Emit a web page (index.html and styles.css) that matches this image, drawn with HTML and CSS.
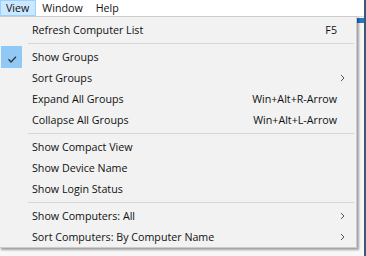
FILE: index.html
```html
<!DOCTYPE html>
<html>
<head>
<meta charset="utf-8">
<link rel="stylesheet" href="styles.css">
</head>
<body>
<div class="app">
  <div class="menubar">
    <span class="mb-item active">View</span>
    <span class="mb-item">Window</span>
    <span class="mb-item">Help</span>
  </div>
  <div class="content">
    <div class="accent"></div>
  </div>
  <div class="menu">
    <div class="item"><span class="label">Refresh Computer List</span><span class="key">F5</span><span class="sub"></span></div>
    <div class="sep"></div>
    <div class="item checked">
      <span class="check"><svg width="21" height="22" viewBox="0 0 21 22"><path d="M7.5 13.3 L10 16 L15 10.8" fill="none" stroke="#333" stroke-width="1.3"/></svg></span>
      <span class="label">Show Groups</span><span class="key"></span><span class="sub"></span>
    </div>
    <div class="item"><span class="label">Sort Groups</span><span class="key"></span><span class="sub"><svg width="5" height="8" viewBox="0 0 5 8"><path d="M1 1 L4 4 L1 7" fill="none" stroke="#555" stroke-width="1"/></svg></span></div>
    <div class="item"><span class="label">Expand All Groups</span><span class="key">Win+Alt+R-Arrow</span><span class="sub"></span></div>
    <div class="item"><span class="label">Collapse All Groups</span><span class="key">Win+Alt+L-Arrow</span><span class="sub"></span></div>
    <div class="sep"></div>
    <div class="item"><span class="label">Show Compact View</span><span class="key"></span><span class="sub"></span></div>
    <div class="item"><span class="label">Show Device Name</span><span class="key"></span><span class="sub"></span></div>
    <div class="item"><span class="label">Show Login Status</span><span class="key"></span><span class="sub"></span></div>
    <div class="sep"></div>
    <div class="item"><span class="label">Show Computers: All</span><span class="key"></span><span class="sub"><svg width="5" height="8" viewBox="0 0 5 8"><path d="M1 1 L4 4 L1 7" fill="none" stroke="#555" stroke-width="1"/></svg></span></div>
    <div class="item"><span class="label">Sort Computers: By Computer Name</span><span class="key"></span><span class="sub"><svg width="5" height="8" viewBox="0 0 5 8"><path d="M1 1 L4 4 L1 7" fill="none" stroke="#555" stroke-width="1"/></svg></span></div>
  </div>
</div>
</body>
</html>
```

FILE: styles.css
```css
html, body {
  margin: 0;
  padding: 0;
  background: #ffffff;
}
body {
  font-family: "Open Sans", "Noto Sans", sans-serif;
  font-size: 10.7px;
  font-weight: 500;
  color: #111;
}
.app {
  position: relative;
  width: 364px;
  height: 256px;
  border-right: 2px solid #3d5873;
  display: flex;
  flex-direction: column;
  overflow: hidden;
}
.menubar {
  height: 16px;
  border-bottom: 1px solid #d9d9d9;
  display: flex;
  align-items: stretch;
  background: #fff;
}
.mb-item {
  display: flex;
  align-items: center;
  padding: 0 6px 0 5px;
  border: 1px solid transparent;
  line-height: 14px;
}
.mb-item.active {
  background: #cce8ff;
  border-color: #99d1ff;
}
.content {
  flex: 1;
  background: #f7f7f7;
  display: flex;
  justify-content: flex-end;
  align-items: flex-start;
}
.accent {
  width: 7px;
  height: 5px;
  margin-top: 1px;
  background: #2678c6;
}
.menu {
  position: absolute;
  left: -1px;
  top: 16px;
  width: 356px;
  background: #f2f2f2;
  border: 1px solid #cccccc;
  padding: 2px 0 0 0;
  box-shadow: 2px 2px 2px rgba(0, 0, 0, 0.35);
}
.item {
  position: relative;
  height: 21px;
  display: flex;
  align-items: center;
  padding-left: 32px;
}
.label {
  flex: 1;
  white-space: nowrap;
}
.key {
  white-space: nowrap;
  text-align: right;
}
.sub {
  width: 19px;
  display: flex;
  justify-content: flex-end;
  padding-right: 11px;
  align-items: center;
  box-sizing: border-box;
}
.check {
  position: absolute;
  left: 1px;
  top: 0;
  width: 21px;
  height: 22px;
  background: #90c8f6;
  display: block;
}
.check svg {
  display: block;
}
.sep {
  height: 1px;
  background: #d7d7d7;
  margin: 3px 2px 2px 28px;
}
```
